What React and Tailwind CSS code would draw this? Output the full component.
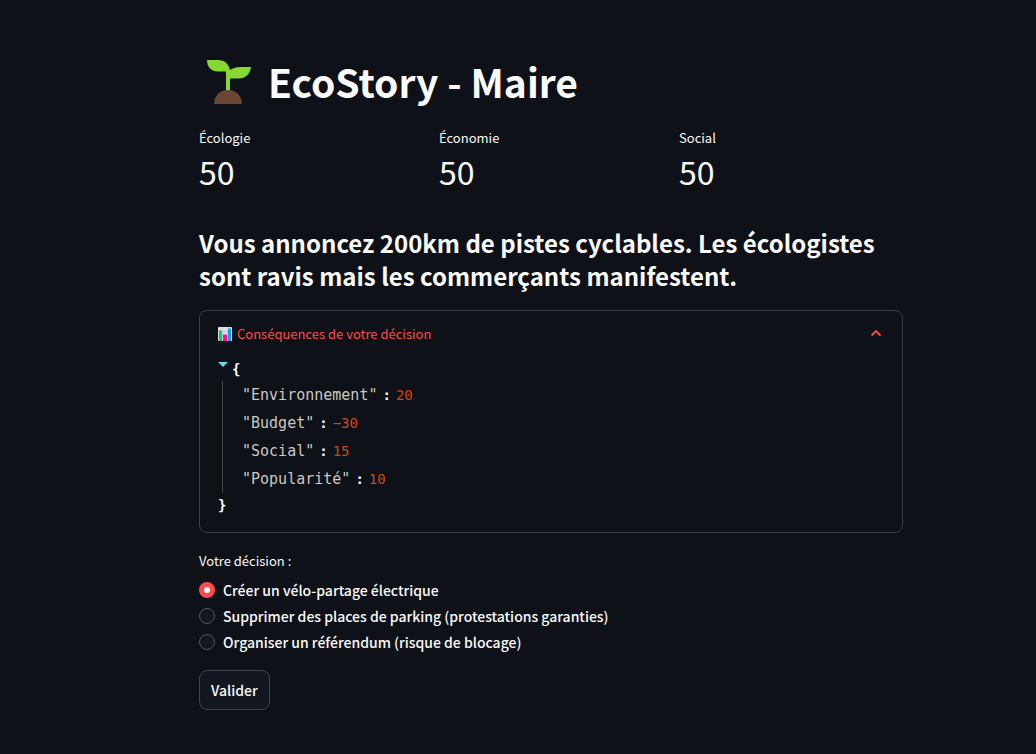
import { useState } from "react";

const METRICS = [
  { label: "Écologie", value: 50 },
  { label: "Économie", value: 50 },
  { label: "Social", value: 50 },
];

const EFFECTS = [
  ["Environnement", "20"],
  ["Budget", "−30"],
  ["Social", "15"],
  ["Popularité", "10"],
];

const CHOICES = [
  "Créer un vélo-partage électrique",
  "Supprimer des places de parking (protestations garanties)",
  "Organiser un référendum (risque de blocage)",
];

function Seedling() {
  return (
    <svg viewBox="0 0 44 44" className="h-11 w-11 shrink-0" aria-hidden="true">
      <path fill="#86d72f" d="M0 0h11c6.500 0 11 4 12 10C25 8.500 29 7 33 7h11c-.5 7-6 11.500-12 11.500h-9V31h-4V11.500h-8C4.500 11.500 0 7 0 0z" />
      <path fill="#6d4534" d="M7 44c0-8 6-14 14-14s14 6 14 14z" />
    </svg>
  );
}

function ChartIcon() {
  return (
    <svg viewBox="0 0 14 14" className="h-3.5 w-3.5 shrink-0" aria-hidden="true">
      <rect width="14" height="14" rx="1" fill="#e4dcec" />
      <path d="M0 4.500h14M0 9h14M4.700 0v14M9.300 0v14" stroke="#c9bfd6" strokeWidth=".6" />
      <rect x="1" y="3.500" width="3" height="10.500" fill="#00d26a" />
      <rect x="5" y="7.500" width="4" height="6.500" fill="#f8128c" />
      <rect x="10" y="1.500" width="3" height="12.500" fill="#00a6ed" />
    </svg>
  );
}

export default function App() {
  const [choice, setChoice] = useState(0);

  return (
    <div className="min-h-screen bg-[#0e1117] pl-[66px] font-['Noto_Sans_CJK_SC',sans-serif] text-[#fafafa]">
      <main className="mx-auto max-w-[704px] pt-[55px] pb-11">
        <h1 className="flex items-center gap-[17px] pl-2 text-[39px] leading-[53px] font-bold">
          <Seedling />
          EcoStory - Maire
        </h1>

        <dl className="mt-[19px] grid grid-cols-3 gap-4">
          {METRICS.map((m) => (
            <div key={m.label}>
              <dt className="text-[13px] leading-[22px]">{m.label}</dt>
              <dd className="text-[32px] leading-[44px]">{m.value}</dd>
            </div>
          ))}
        </dl>

        <h2 className="mt-[33px] text-[24px] leading-[33px] font-bold">
          Vous annoncez 200km de pistes cyclables. Les écologistes sont ravis mais les commerçants manifestent.
        </h2>

        <details open className="group mt-[18px] rounded-lg border border-[#3c3e44]">
          <summary className="flex cursor-pointer list-none items-center gap-[5px] px-[18px] py-3 text-[13px] leading-[22px] text-[#ff4b4b]">
            <ChartIcon />
            <span className="grow">Conséquences de votre décision</span>
            <svg viewBox="0 0 16 16" className="h-4 w-4 rotate-180 group-open:rotate-0" fill="none" stroke="currentColor" strokeWidth="1.800" aria-hidden="true">
              <path d="M3.500 9.500 8 5l4.500 4.500" />
            </svg>
          </summary>
          <div className="px-[18px] pb-[15px] font-['DejaVu_Sans_Mono',monospace] text-[14px]">
            <div className="flex items-start gap-1 leading-6 font-bold">
              <svg viewBox="0 0 10 5" className="mt-[5px] h-[5px] w-[10px]" aria-hidden="true">
                <path d="M0 0h10L5 5z" fill="#66d9ef" />
              </svg>
              {"{"}
            </div>
            <dl className="ml-1 border-l border-[#49483e] pl-[19px]">
              {EFFECTS.map(([name, value]) => (
                <div key={name} className="flex items-center leading-7">
                  <dt className="text-[15px] text-[#c8c8c2]">"{name}"</dt>
                  <dd className="flex">
                    <span className="mx-[5px] font-bold">:</span>
                    <span className="text-[#cb4b16]">{value}</span>
                  </dd>
                </div>
              ))}
            </dl>
            <div className="leading-6 font-bold">{"}"}</div>
          </div>
        </details>

        <fieldset className="mt-[17px]">
          <legend className="text-[13px] leading-[22px]">Votre décision :</legend>
          <div className="mt-1.5 flex flex-col items-start gap-0.5">
            {CHOICES.map((text, i) => (
              <label key={text} className="flex items-center gap-2 text-[14px] leading-6 font-medium">
                <input
                  type="radio"
                  name="decision"
                  checked={choice === i}
                  onChange={() => setChoice(i)}
                  className="h-4 w-4 appearance-none rounded-full border border-[#55575d] bg-[#131720] checked:border-[5px] checked:border-[#ff4b4b] checked:bg-[#fafafa]"
                />
                {text}
              </label>
            ))}
          </div>
        </fieldset>

        <button type="button" className="mt-4 h-10 rounded-lg border border-[#41444c] bg-[#131720] px-[11px] text-[14px] leading-6 font-medium">
          Valider
        </button>
      </main>
    </div>
  );
}
